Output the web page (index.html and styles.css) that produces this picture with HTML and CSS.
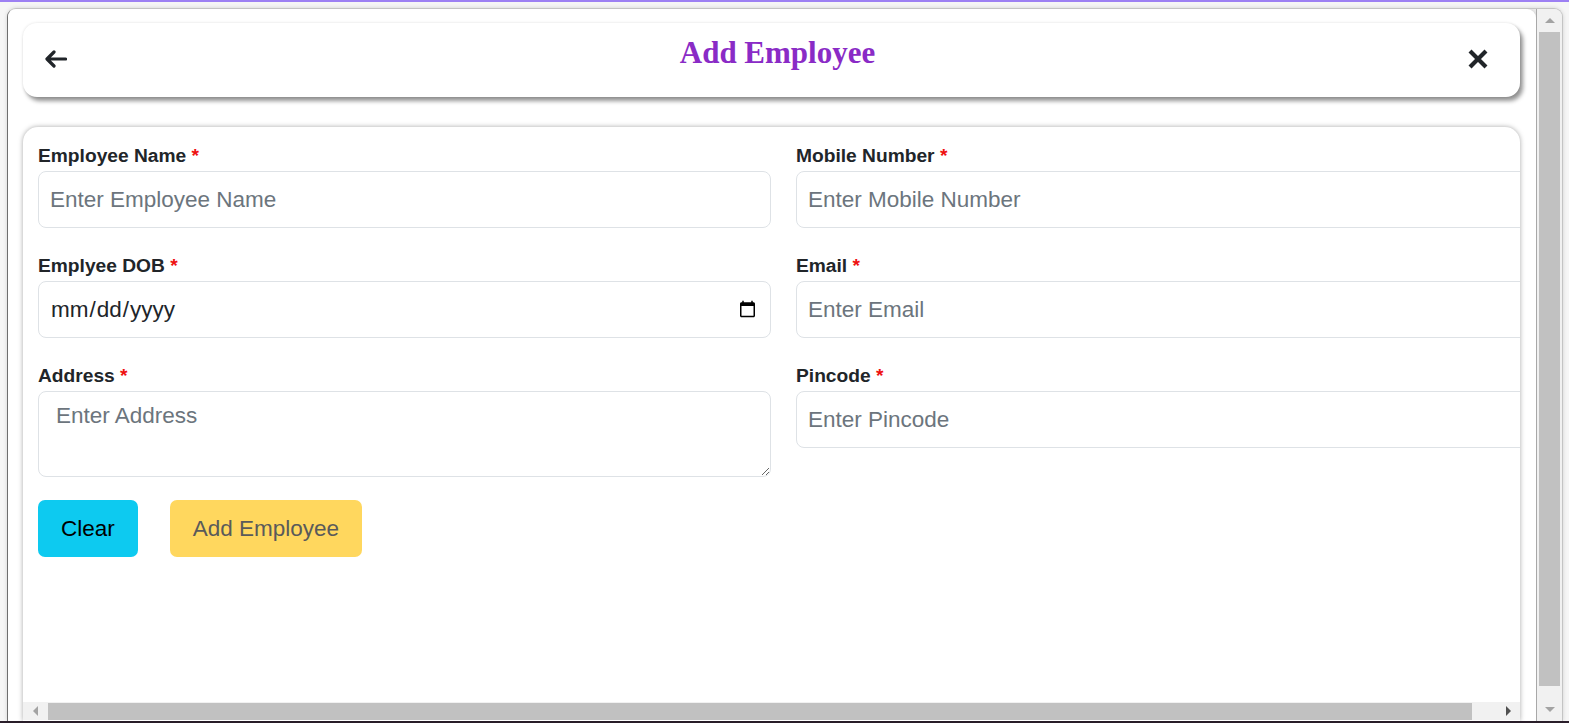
FILE: index.html
```html
<!DOCTYPE html>
<html lang="en">
<head>
<meta charset="utf-8">
<title>Add Employee</title>
<link rel="stylesheet" href="styles.css">
</head>
<body>
<div class="screen">
  <div class="window">
    <div class="viewport">
      <header class="top-card">
        <button class="icon-btn" aria-label="Back">
          <svg width="22" height="18" viewBox="0 0 22 18"><path d="M9 2 L2 9 L9 16 M2.5 9 H20.5" fill="none" stroke="#212529" stroke-width="3.2" stroke-linecap="round" stroke-linejoin="round"/></svg>
        </button>
        <h1 class="title">Add Employee</h1>
        <button class="icon-btn" aria-label="Close">
          <svg width="20" height="20" viewBox="0 0 20 20"><path d="M3.5 3.5 L16.5 16.5 M16.5 3.5 L3.5 16.5" fill="none" stroke="#212529" stroke-width="4.2" stroke-linecap="square"/></svg>
        </button>
      </header>

      <section class="form-card">
        <div class="form-body">
          <form class="form-grid">
            <div class="field">
              <label class="label">Employee Name <span class="req">*</span></label>
              <input class="control" type="text" placeholder="Enter Employee Name">
            </div>
            <div class="field">
              <label class="label">Mobile Number <span class="req">*</span></label>
              <input class="control" type="text" placeholder="Enter Mobile Number">
            </div>
            <div class="field">
              <label class="label">Emplyee DOB <span class="req">*</span></label>
              <input class="control date" type="date">
            </div>
            <div class="field">
              <label class="label">Email <span class="req">*</span></label>
              <input class="control" type="email" placeholder="Enter Email">
            </div>
            <div class="field">
              <label class="label">Address <span class="req">*</span></label>
              <textarea class="control area" placeholder="Enter Address"></textarea>
            </div>
            <div class="field">
              <label class="label">Pincode <span class="req">*</span></label>
              <input class="control" type="text" placeholder="Enter Pincode">
            </div>
          </form>
          <div class="actions">
            <button class="btn btn-clear" type="button">Clear</button>
            <button class="btn btn-add" type="button" disabled>Add Employee</button>
          </div>
        </div>
        <div class="hscroll">
          <div class="sb-btn"><span class="tri tri-left"></span></div>
          <div class="h-thumb"></div>
          <div class="h-rest"></div>
          <div class="sb-btn"><span class="tri tri-right"></span></div>
        </div>
      </section>
    </div>
    <div class="vscroll">
      <div class="v-btn"><span class="tri tri-up"></span></div>
      <div class="v-thumb"></div>
      <div class="v-rest"></div>
      <div class="v-btn v-btn-down"><span class="tri tri-down"></span></div>
    </div>
  </div>
</div>
</body>
</html>
```

FILE: styles.css
```css
* { box-sizing: border-box; }

html, body {
  margin: 0;
  padding: 0;
}

body {
  background: #f6f6f6;
  font-family: "Liberation Sans", Arial, sans-serif;
  color: #212529;
}

.screen {
  height: 723px;
  border-top: 2px solid #9d80f3;
  border-bottom: 2px solid #2b1f2b;
  padding: 6px 6px 0 7px;
  display: flex;
}

.window {
  flex: 1;
  display: flex;
  border: 1px solid #c4c4c4;
  border-left-color: #6e6e6e;
  border-bottom: none;
  border-radius: 9px 9px 0 0;
  overflow: hidden;
  background: #f1f1f1;
  box-shadow: 0 0 4px rgba(0,0,0,0.15);
}

.viewport {
  flex: 1;
  background: #fff;
  padding: 14px 16px 0 15px;
  overflow: hidden;
  border-radius: 0 9px 0 0;
  box-shadow: 2px 0 4px rgba(0,0,0,0.12);
  display: flex;
  flex-direction: column;
}

/* header card */
.top-card {
  height: 74px;
  flex: none;
  display: flex;
  align-items: center;
  justify-content: space-between;
  padding: 0 32px 3px 22px;
  background: #fff;
  border-radius: 14px;
  box-shadow: 3px 4px 4px rgba(0,0,0,0.42), 0 0 3px rgba(0,0,0,0.12);
}

.icon-btn {
  background: none;
  border: 0;
  padding: 0;
  margin: 0;
  display: flex;
  line-height: 0;
}

.title {
  margin: 0 0 12px 20px;
  font-family: "Liberation Serif", "Times New Roman", serif;
  font-weight: bold;
  font-size: 31px;
  line-height: 31px;
  color: #8a2bc6;
}

/* form card */
.form-card {
  margin-top: 30px;
  flex: 1;
  min-height: 0;
  display: flex;
  flex-direction: column;
  background: #fff;
  border-radius: 15px 15px 0 0;
  box-shadow: 0 0 5px rgba(0,0,0,0.35);
  overflow: hidden;
}

.form-body {
  flex: 1;
  min-height: 0;
  overflow: hidden;
  padding: 17px 0 0 15px;
}

.form-grid {
  display: grid;
  grid-template-columns: 733px 733px;
  column-gap: 25px;
  row-gap: 26px;
  width: 1491px;
  margin: 0;
}

.field {
  display: flex;
  flex-direction: column;
}

.label {
  display: block;
  font-size: 19.2px;
  line-height: 23px;
  font-weight: bold;
  margin-bottom: 4px;
  color: #212529;
}

.req {
  color: #ee1111;
}

.control {
  display: block;
  width: 100%;
  height: 57px;
  padding: 0 11px;
  font-family: "Liberation Sans", Arial, sans-serif;
  font-size: 22.5px;
  color: #212529;
  background: #fff;
  border: 1px solid #dee2e6;
  border-radius: 8px;
  outline: none;
}

.control::placeholder {
  color: #6c757d;
}

.date {
  padding-right: 11px;
}

.date::-webkit-calendar-picker-indicator {
  width: 19px;
  height: 19px;
  margin-left: 4px;
}

.area {
  height: 86px;
  padding: 7px 17px;
  line-height: 1.5;
  resize: vertical;
}

.actions {
  display: flex;
  gap: 32px;
  margin-top: 23px;
}

.btn {
  height: 57px;
  padding: 0 23px;
  font-family: "Liberation Sans", Arial, sans-serif;
  font-size: 22.5px;
  border: 0;
  border-radius: 7px;
}

.btn-clear {
  background: #0dcaf0;
  color: #000;
}

.btn-add {
  background: #ffd75e;
  color: #5a5a5a;
}

/* fake scrollbars */
.hscroll {
  flex: none;
  height: 18px;
  margin-bottom: 1px;
  display: flex;
  background: #f1f1f1;
}

.sb-btn {
  width: 24px;
  display: flex;
  align-items: center;
  justify-content: center;
}

.h-thumb {
  width: 1424px;
  margin: 1px 0 0 1px;
  background: #c1c1c1;
}

.h-rest {
  flex: 1;
}

.vscroll {
  width: 26px;
  flex: none;
  border-left: 1px solid #a8a8a8;
  background: #f1f1f1;
  display: flex;
  flex-direction: column;
}

.v-btn {
  height: 23px;
  display: flex;
  align-items: center;
  justify-content: center;
}

.v-btn-down {
  height: 24px;
}

.v-thumb {
  height: 654px;
  margin: 0 2px;
  background: #c1c1c1;
}

.v-rest {
  flex: 1;
}

.tri {
  display: block;
  width: 0;
  height: 0;
}

.tri-up {
  border-left: 5px solid transparent;
  border-right: 5px solid transparent;
  border-bottom: 5px solid #a3a3a3;
}

.tri-down {
  border-left: 5px solid transparent;
  border-right: 5px solid transparent;
  border-top: 5px solid #a3a3a3;
}

.tri-left {
  border-top: 5px solid transparent;
  border-bottom: 5px solid transparent;
  border-right: 5px solid #a3a3a3;
}

.tri-right {
  border-top: 5px solid transparent;
  border-bottom: 5px solid transparent;
  border-left: 5px solid #505050;
}
```
